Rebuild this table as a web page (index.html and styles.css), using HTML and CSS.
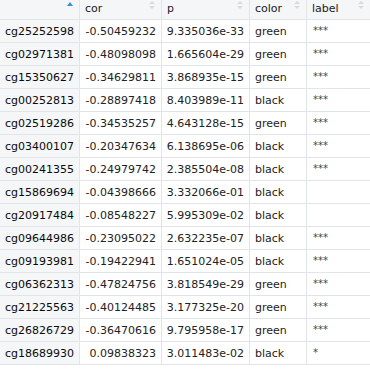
FILE: index.html
```html
<!DOCTYPE html>
<html>
<head>
<meta charset="utf-8">
<link rel="stylesheet" href="styles.css">
</head>
<body>
<div class="grid">
  <div class="row head">
    <div class="cell rn"><span class="sort-active"></span></div>
    <div class="cell">cor<span class="sort"></span></div>
    <div class="cell">p<span class="sort"></span></div>
    <div class="cell">color<span class="sort"></span></div>
    <div class="cell">label<span class="sort"></span></div>
  </div>
  <div class="row"><div class="cell rn">cg25252598</div><div class="cell num">-0.50459232</div><div class="cell num">9.335036e-33</div><div class="cell">green</div><div class="cell lab">***</div></div>
  <div class="row"><div class="cell rn">cg02971381</div><div class="cell num">-0.48098098</div><div class="cell num">1.665604e-29</div><div class="cell">green</div><div class="cell lab">***</div></div>
  <div class="row"><div class="cell rn">cg15350627</div><div class="cell num">-0.34629811</div><div class="cell num">3.868935e-15</div><div class="cell">green</div><div class="cell lab">***</div></div>
  <div class="row"><div class="cell rn">cg00252813</div><div class="cell num">-0.28897418</div><div class="cell num">8.403989e-11</div><div class="cell">black</div><div class="cell lab">***</div></div>
  <div class="row"><div class="cell rn">cg02519286</div><div class="cell num">-0.34535257</div><div class="cell num">4.643128e-15</div><div class="cell">green</div><div class="cell lab">***</div></div>
  <div class="row"><div class="cell rn">cg03400107</div><div class="cell num">-0.20347634</div><div class="cell num">6.138695e-06</div><div class="cell">black</div><div class="cell lab">***</div></div>
  <div class="row"><div class="cell rn">cg00241355</div><div class="cell num">-0.24979742</div><div class="cell num">2.385504e-08</div><div class="cell">black</div><div class="cell lab">***</div></div>
  <div class="row"><div class="cell rn">cg15869694</div><div class="cell num">-0.04398666</div><div class="cell num">3.332066e-01</div><div class="cell">black</div><div class="cell lab"></div></div>
  <div class="row"><div class="cell rn">cg20917484</div><div class="cell num">-0.08548227</div><div class="cell num">5.995309e-02</div><div class="cell">black</div><div class="cell lab"></div></div>
  <div class="row"><div class="cell rn">cg09644986</div><div class="cell num">-0.23095022</div><div class="cell num">2.632235e-07</div><div class="cell">black</div><div class="cell lab">***</div></div>
  <div class="row"><div class="cell rn">cg09193981</div><div class="cell num">-0.19422941</div><div class="cell num">1.651024e-05</div><div class="cell">black</div><div class="cell lab">***</div></div>
  <div class="row"><div class="cell rn">cg06362313</div><div class="cell num">-0.47824756</div><div class="cell num">3.818549e-29</div><div class="cell">green</div><div class="cell lab">***</div></div>
  <div class="row"><div class="cell rn">cg21225563</div><div class="cell num">-0.40124485</div><div class="cell num">3.177325e-20</div><div class="cell">green</div><div class="cell lab">***</div></div>
  <div class="row"><div class="cell rn">cg26826729</div><div class="cell num">-0.36470616</div><div class="cell num">9.795958e-17</div><div class="cell">green</div><div class="cell lab">***</div></div>
  <div class="row"><div class="cell rn">cg18689930</div><div class="cell num">0.09838323</div><div class="cell num">3.011483e-02</div><div class="cell">black</div><div class="cell lab">*</div></div>
</div>
</body>
</html>
```
FILE: styles.css
```css
html, body {
  margin: 0;
  padding: 0;
  background: #ffffff;
}
body {
  font-family: "DejaVu Sans", sans-serif;
  font-size: 11px;
  color: #222222;
}
.grid {
  width: 370px;
}
.row {
  display: grid;
  grid-template-columns: 80px 82px 88px 57px 63px;
  height: 23px;
}
.row.head {
  height: 20px;
  background: #f4f6f8;
}
.cell {
  box-sizing: border-box;
  border-right: 1px solid #e2e5e8;
  border-bottom: 1px solid #e2e5e8;
  padding: 0 5px 0 5px;
  display: flex;
  align-items: center;
  white-space: nowrap;
  overflow: hidden;
  position: relative;
}
.cell:last-child {
  border-right: none;
}
.head .cell {
  color: #1a1a1a;
  padding-bottom: 2px;
}
.rn {
  background: #f4f6f8;
  color: #0a0a0a;
  padding-left: 5px;
}
.num {
  justify-content: flex-end;
  padding-right: 5px;
}
.lab {
  font-size: 10px;
  color: #444444;
  padding-left: 6px;
  padding-bottom: 2px;
}
.sort {
  position: absolute;
  right: 6px;
  top: 1px;
  width: 6px;
  height: 8px;
}
.sort::before, .sort::after {
  content: "";
  position: absolute;
  left: 0;
  border-left: 3px solid transparent;
  border-right: 3px solid transparent;
}
.sort::before {
  top: 0;
  border-bottom: 3px solid #d8dbde;
}
.sort::after {
  top: 5px;
  border-top: 3px solid #d8dbde;
}
.sort-active {
  position: absolute;
  right: 6px;
  top: 2px;
  width: 0;
  height: 0;
  border-left: 3px solid transparent;
  border-right: 3px solid transparent;
  border-bottom: 4px solid #3a8fdc;
}
```
